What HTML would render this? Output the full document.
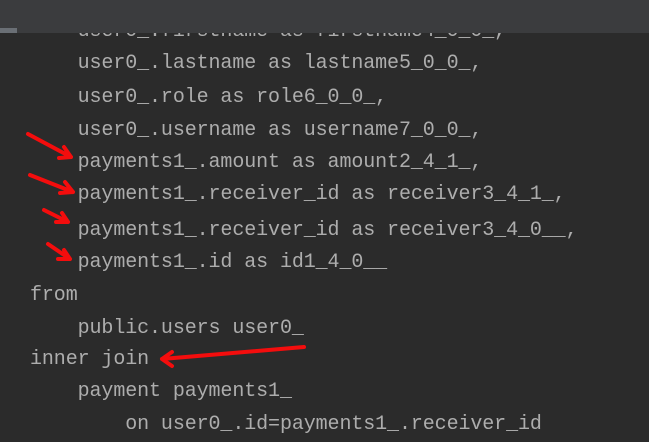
<!DOCTYPE html>
<html><head><style>
body{margin:0;width:649px;height:442px;background:#2b2b2b;overflow:hidden;position:relative}
.bar{position:absolute;left:0;top:0;width:649px;height:33px;background:#3b3c3e}
.tab{position:absolute;left:0;top:28px;width:17px;height:5px;background:#6a6f75}
.l{position:absolute;left:30px;font:20px/1 "Liberation Mono",monospace;color:#adadad;white-space:pre;letter-spacing:-0.1px}
svg{position:absolute;left:0;top:0}
</style></head><body>
<div class="l" style="top:22px">    user0_.firstname as firstname4_0_0_,</div>
<div class="bar"></div><div class="tab"></div>
<div class="l" style="top:54px">    user0_.lastname as lastname5_0_0_,</div>
<div class="l" style="top:88px">    user0_.role as role6_0_0_,</div>
<div class="l" style="top:121px">    user0_.username as username7_0_0_,</div>
<div class="l" style="top:153px">    payments1_.amount as amount2_4_1_,</div>
<div class="l" style="top:185px">    payments1_.receiver_id as receiver3_4_1_,</div>
<div class="l" style="top:221px">    payments1_.receiver_id as receiver3_4_0__,</div>
<div class="l" style="top:253px">    payments1_.id as id1_4_0__</div>
<div class="l" style="top:286px">from</div>
<div class="l" style="top:319px">    public.users user0_</div>
<div class="l" style="top:350px">inner join</div>
<div class="l" style="top:382px">    payment payments1_</div>
<div class="l" style="top:415px">        on user0_.id=payments1_.receiver_id</div>
<svg width="649" height="442" fill="none" stroke="#f40d0d" stroke-width="4" stroke-linecap="round" stroke-linejoin="round">
<path d="M28 134L71 157M59 158L71 157L64 147"/>
<path d="M30 175L73 192M60 193L73 192L65 182"/>
<path d="M44 210L68 222M56 222L68 222L62 213"/>
<path d="M48 244L70 259M58 259L70 259L64 250"/>
<path d="M304 347L162 359M172 352L162 359L172 366"/>
</svg>
</body></html>
